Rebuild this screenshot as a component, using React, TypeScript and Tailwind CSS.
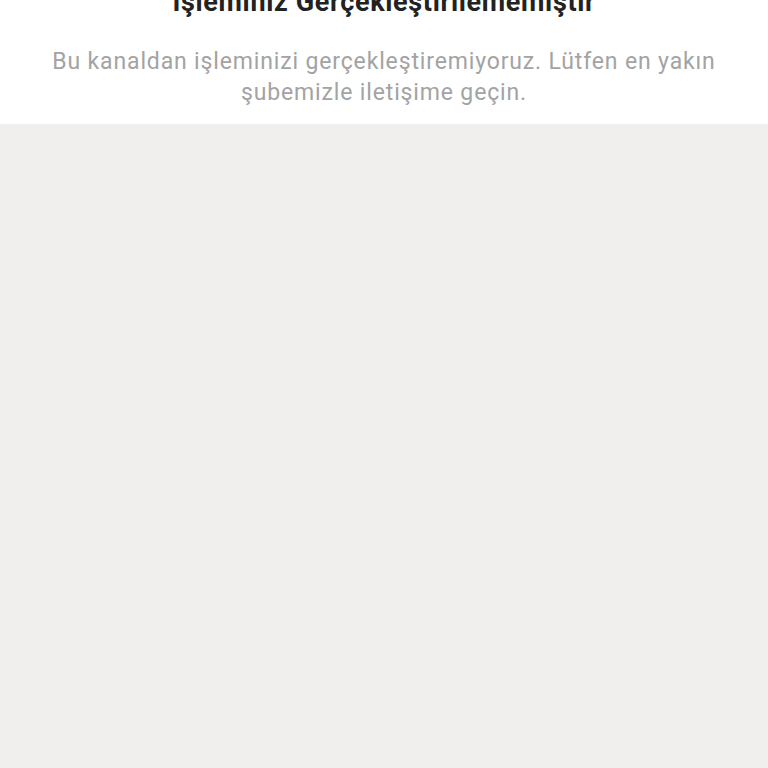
const App = () => {
  return (
    <div className="min-h-screen bg-[#f0efee] flex flex-col">
      {/* Ust bilgi alani */}
      <div className="bg-white px-10 pb-[16px] flex flex-col items-center text-center">
        <h1
          className="-mt-[13px] text-[27px] leading-[30px] font-bold tracking-[0.65px] text-[#222222]"
          style={{ fontFamily: 'Roboto, "Liberation Sans", Arial, sans-serif' }}
        >
          İşleminiz Gerçekleştirilememiştir
        </h1>
        <p
          className="mt-[29px] text-[23px] leading-[31px] tracking-[0.85px] text-[#a3a3a3]"
          style={{ fontFamily: 'Roboto, "Noto Sans", sans-serif' }}
        >
          Bu kanaldan işleminizi gerçekleştiremiyoruz. Lütfen en yakın
          <br />
          şubemizle iletişime geçin.
        </p>
      </div>
    </div>
  );
};

export default App;
